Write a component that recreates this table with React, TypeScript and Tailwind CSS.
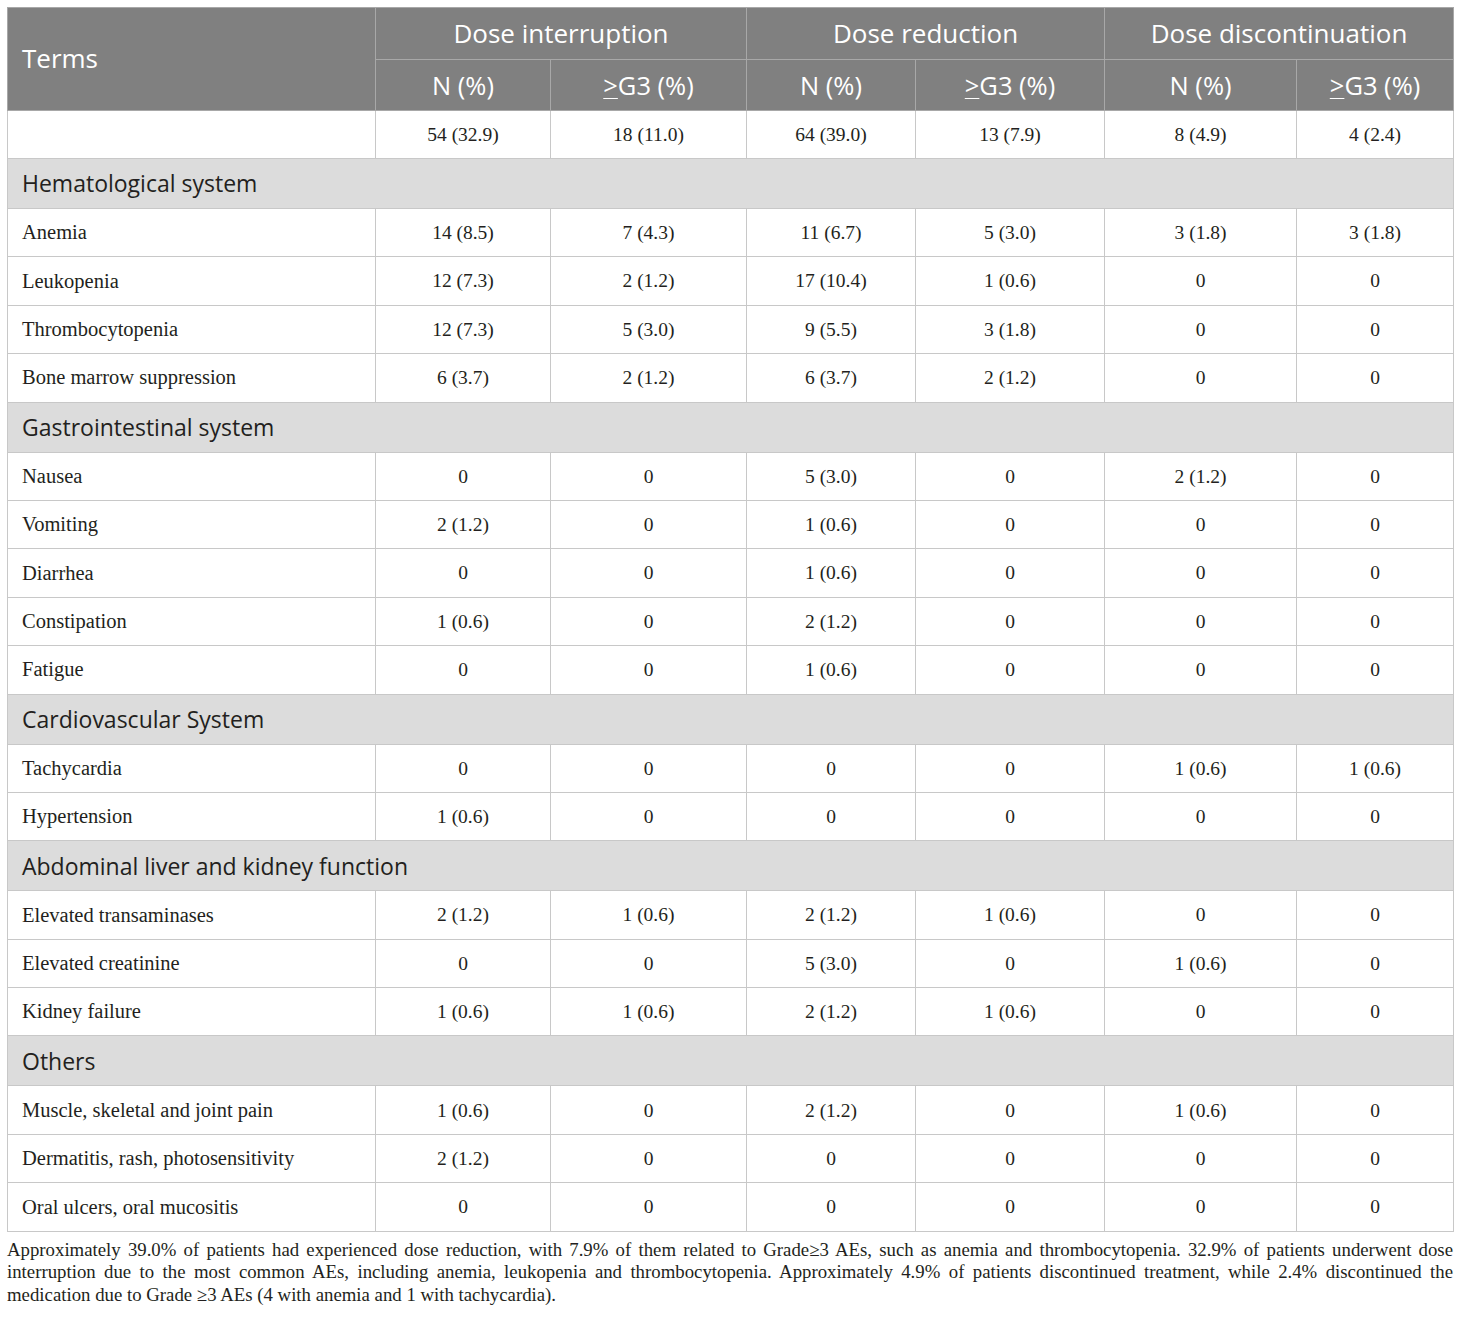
import React from 'react'

type Row = { term: string; v: string[] } | { section: string }

const rows: Row[] = [
  { section: 'Hematological system' },
  { term: 'Anemia', v: ['14 (8.5)', '7 (4.3)', '11 (6.7)', '5 (3.0)', '3 (1.8)', '3 (1.8)'] },
  { term: 'Leukopenia', v: ['12 (7.3)', '2 (1.2)', '17 (10.4)', '1 (0.6)', '0', '0'] },
  { term: 'Thrombocytopenia', v: ['12 (7.3)', '5 (3.0)', '9 (5.5)', '3 (1.8)', '0', '0'] },
  { term: 'Bone marrow suppression', v: ['6 (3.7)', '2 (1.2)', '6 (3.7)', '2 (1.2)', '0', '0'] },
  { section: 'Gastrointestinal system' },
  { term: 'Nausea', v: ['0', '0', '5 (3.0)', '0', '2 (1.2)', '0'] },
  { term: 'Vomiting', v: ['2 (1.2)', '0', '1 (0.6)', '0', '0', '0'] },
  { term: 'Diarrhea', v: ['0', '0', '1 (0.6)', '0', '0', '0'] },
  { term: 'Constipation', v: ['1 (0.6)', '0', '2 (1.2)', '0', '0', '0'] },
  { term: 'Fatigue', v: ['0', '0', '1 (0.6)', '0', '0', '0'] },
  { section: 'Cardiovascular System' },
  { term: 'Tachycardia', v: ['0', '0', '0', '0', '1 (0.6)', '1 (0.6)'] },
  { term: 'Hypertension', v: ['1 (0.6)', '0', '0', '0', '0', '0'] },
  { section: 'Abdominal liver and kidney function' },
  { term: 'Elevated transaminases', v: ['2 (1.2)', '1 (0.6)', '2 (1.2)', '1 (0.6)', '0', '0'] },
  { term: 'Elevated creatinine', v: ['0', '0', '5 (3.0)', '0', '1 (0.6)', '0'] },
  { term: 'Kidney failure', v: ['1 (0.6)', '1 (0.6)', '2 (1.2)', '1 (0.6)', '0', '0'] },
  { section: 'Others' },
  { term: 'Muscle, skeletal and joint pain', v: ['1 (0.6)', '0', '2 (1.2)', '0', '1 (0.6)', '0'] },
  { term: 'Dermatitis, rash, photosensitivity', v: ['2 (1.2)', '0', '0', '0', '0', '0'] },
  { term: 'Oral ulcers, oral mucositis', v: ['0', '0', '0', '0', '0', '0'] },
]

const widths = ['w-[368px]', 'w-[175px]', 'w-[196px]', 'w-[169px]', 'w-[189px]', 'w-[192px]', 'w-[157px]']

const sans = "font-['Open_Sans',sans-serif]"
const serif = "font-['Liberation_Serif',serif]"

function G3() {
  return (
    <>
      <span className="underline underline-offset-[3px] decoration-1">&gt;</span>G3 (%)
    </>
  )
}

export default function App() {
  return (
    <div className="bg-white w-[1460px] min-h-[1317px] pt-[7px] px-[7px] text-[#231f20]">
      <table className="border-collapse table-fixed w-[1446px]">
        <colgroup>
          {widths.map((w, i) => (
            <col key={i} className={w} />
          ))}
        </colgroup>
        <thead className={`${sans} text-white`}>
          <tr className="h-[52px] bg-[#808080]">
            <th rowSpan={2} className="border border-[#a8a8a8] text-left font-normal text-[26px] pl-[14px] pb-[2px]">
              Terms
            </th>
            <th colSpan={2} className="border border-[#a8a8a8] font-normal text-[26px]">Dose interruption</th>
            <th colSpan={2} className="border border-[#a8a8a8] font-normal text-[26px]">Dose reduction</th>
            <th colSpan={2} className="border border-[#a8a8a8] font-normal text-[26px]">Dose discontinuation</th>
          </tr>
          <tr className="h-[51px] bg-[#808080]">
            {[0, 1, 2].map((i) => (
              <React.Fragment key={i}>
                <th className="border border-[#a8a8a8] font-normal text-[25.5px]">N (%)</th>
                <th className="border border-[#a8a8a8] font-normal text-[25.5px]">
                  <G3 />
                </th>
              </React.Fragment>
            ))}
          </tr>
        </thead>
        <tbody className={`${serif} text-[19.5px]`}>
          <tr className="h-[48px]">
            <td className="border border-[#c8c8c8]" />
            {['54 (32.9)', '18 (11.0)', '64 (39.0)', '13 (7.9)', '8 (4.9)', '4 (2.4)'].map((v, i) => (
              <td key={i} className="border border-[#c8c8c8] text-center">{v}</td>
            ))}
          </tr>
          {rows.map((r, i) =>
            'section' in r ? (
              <tr key={i} className="h-[50px] bg-[#dcdcdc]">
                <td colSpan={7} className={`${sans} border border-[#c8c8c8] text-[23px] pl-[14px]`}>
                  {r.section}
                </td>
              </tr>
            ) : (
              <tr key={i} className="h-[48.4px]">
                <td className="border border-[#c8c8c8] pl-[14px] text-[20.5px]">{r.term}</td>
                {r.v.map((v, j) => (
                  <td key={j} className="border border-[#c8c8c8] text-center">{v}</td>
                ))}
              </tr>
            )
          )}
        </tbody>
      </table>
      <div className={`${serif} text-[18.8px] leading-[22.5px] mt-[7px] w-[1446px]`}>
        <p className="text-justify [text-align-last:justify]">
          Approximately 39.0% of patients had experienced dose reduction, with 7.9% of them related to Grade≥3 AEs, such as
          anemia and thrombocytopenia. 32.9% of patients underwent dose
        </p>
        <p className="text-justify [text-align-last:justify]">
          interruption due to the most common AEs, including anemia, leukopenia and thrombocytopenia. Approximately 4.9%
          of patients discontinued treatment, while 2.4% discontinued the
        </p>
        <p>medication due to Grade ≥3 AEs (4 with anemia and 1 with tachycardia).</p>
      </div>
    </div>
  )
}
